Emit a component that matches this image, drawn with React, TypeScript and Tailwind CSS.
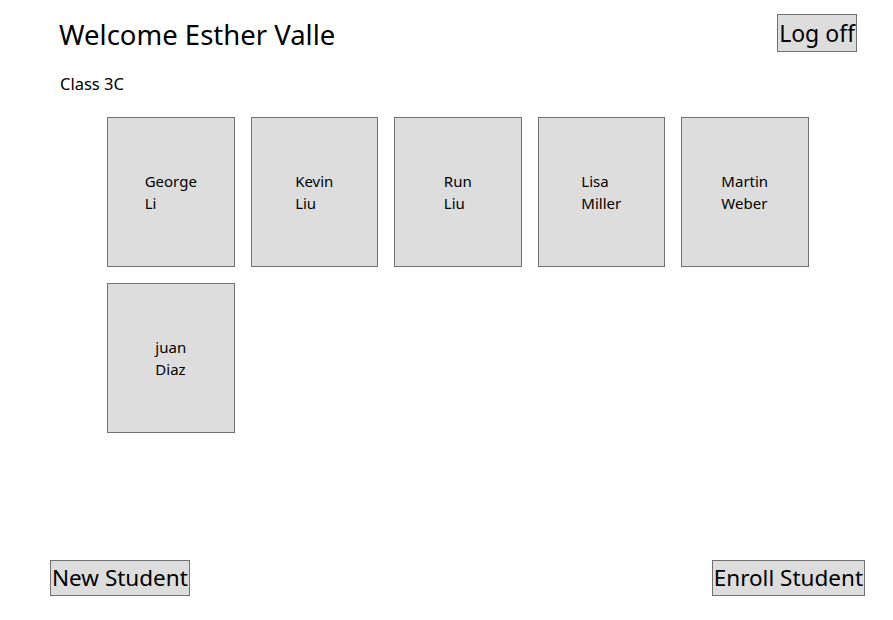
const students = [
  { first: 'George', last: 'Li' },
  { first: 'Kevin', last: 'Liu' },
  { first: 'Run', last: 'Liu' },
  { first: 'Lisa', last: 'Miller' },
  { first: 'Martin', last: 'Weber' },
  { first: 'juan', last: 'Diaz' },
]

function StudentCard({ first, last }: { first: string; last: string }) {
  return (
    <div className="flex h-[150px] w-[127.5px] items-center justify-center border border-[#707070] bg-[#dddddd]">
      <div className="text-[15px] leading-[22px] text-black">
        <div>{first}</div>
        <div>{last}</div>
      </div>
    </div>
  )
}

export default function App() {
  return (
    <div className="flex h-[620px] w-[893px] flex-col bg-white font-['Noto_Sans',sans-serif] text-black">
      <div className="flex items-start justify-between pl-[59px] pr-[36px] pt-[14px]">
        <h1 className="mt-[2px] text-[27.5px] leading-[38px]">Welcome Esther Valle</h1>
        <button className="h-[38px] border border-[#707070] bg-[#dddddd] px-[1px] text-[23px] leading-[34px]">
          Log off
        </button>
      </div>
      <div className="pl-[60px] pt-[19px] text-[16.5px] leading-[22px]">Class 3C</div>
      <div className="flex w-[812px] flex-wrap gap-x-[16px] gap-y-[16px] pl-[107px] pt-[22px]">
        {students.map((s) => (
          <StudentCard key={s.first + s.last} first={s.first} last={s.last} />
        ))}
      </div>
      <div className="mt-auto flex items-end justify-between pb-[24px] pl-[50px] pr-[28px]">
        <button className="h-[36px] border border-[#707070] bg-[#dddddd] px-[1px] text-[22.5px] leading-[32px]">
          New Student
        </button>
        <button className="h-[36px] border border-[#707070] bg-[#dddddd] px-[1px] text-[22.5px] leading-[32px]">
          Enroll Student
        </button>
      </div>
    </div>
  )
}
